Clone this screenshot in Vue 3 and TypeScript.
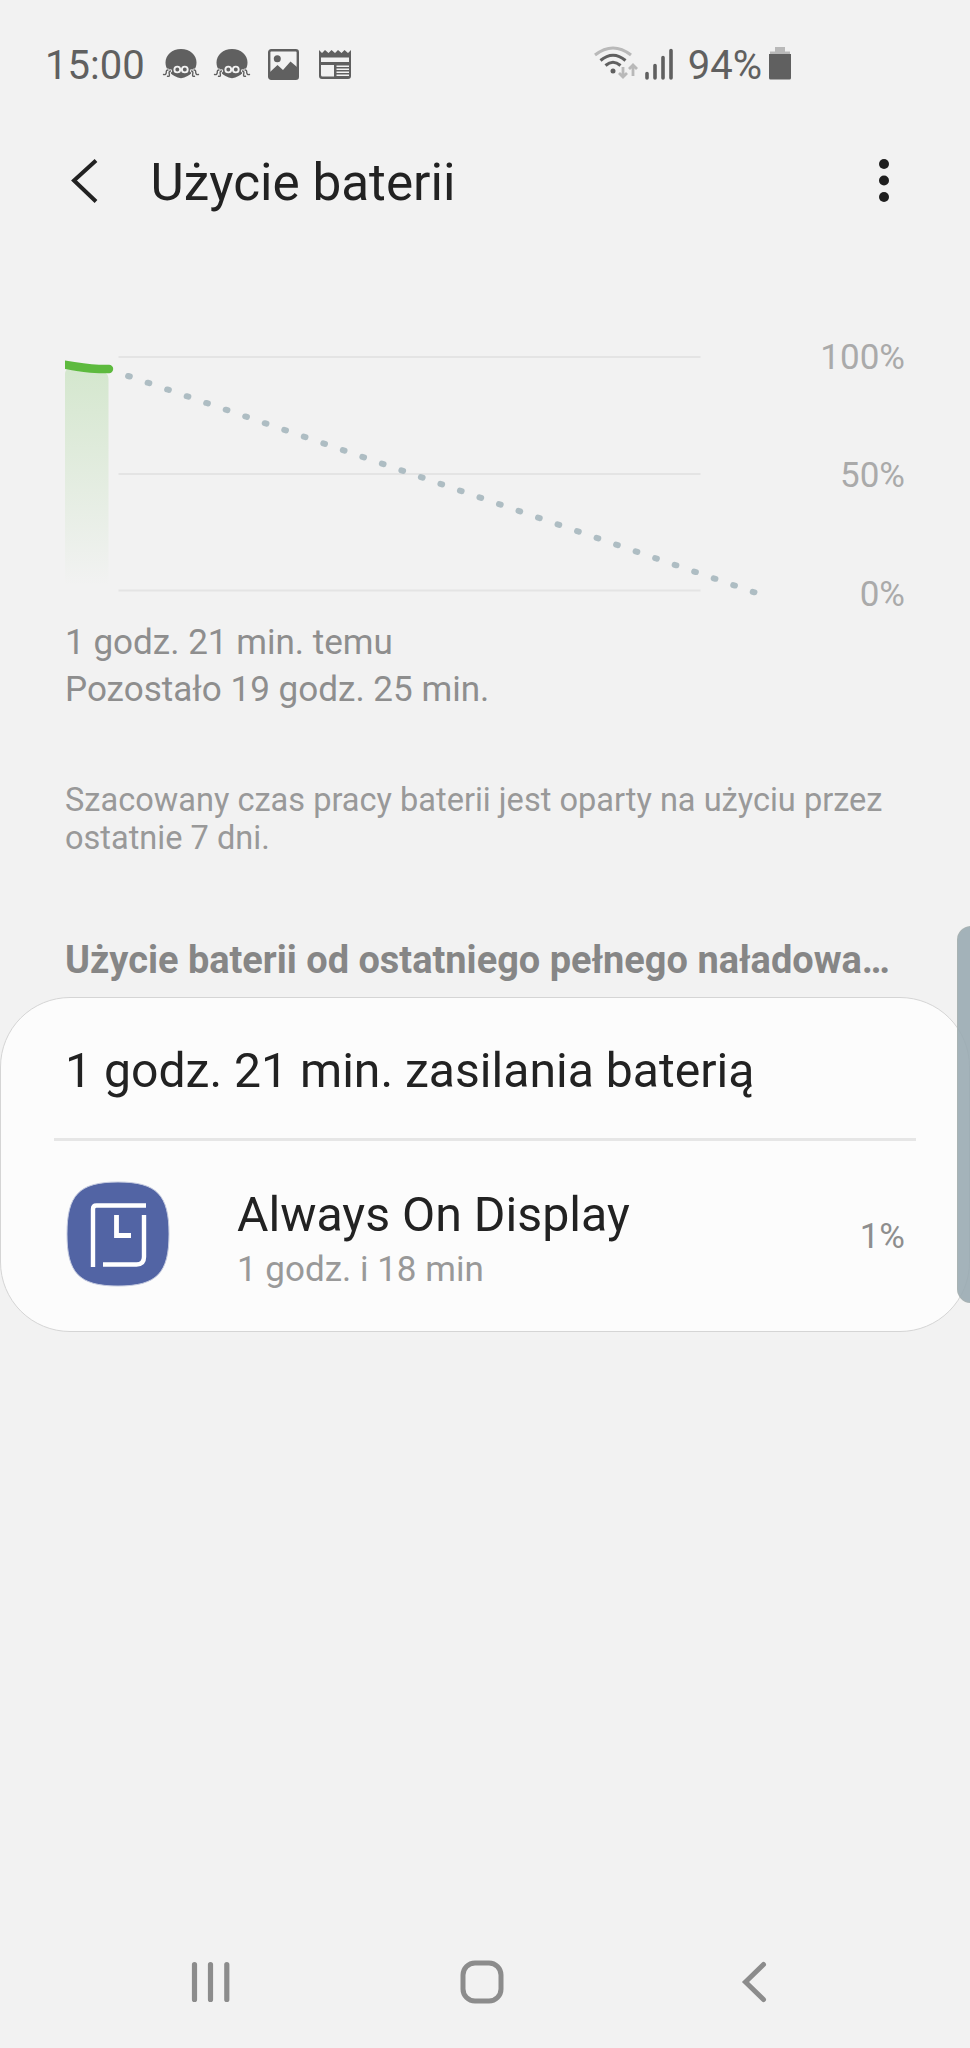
<script setup lang="ts">
interface AppUsage {
  name: string
  duration: string
  percent: string
}

const levels: string[] = ['100%', '50%', '0%']
const gridLines: number[] = [27, 144, 260.5]

// Forecast: evenly spaced dashes falling from the current level to empty.
const forecast = Array.from({ length: 33 }, (_, i) => ({
  x: 63.1 + i * 19.52,
  y: 46 + i * 6.743,
}))

const apps: AppUsage[] = [
  { name: 'Always On Display', duration: '1 godz. i 18 min', percent: '1%' },
]
</script>

<template>
  <div class="screen">
    <header class="status">
      <span class="clock">15:00</span>
      <div class="notices">
        <svg v-for="n in 2" :key="n" class="spider" width="38" height="32" viewBox="0 0 38 32">
          <path d="M19 1C28 1 34.5 7 34.5 14.500C34.5 20 31.500 24.500 25.500 28Q19 32.300 12.500 28C6.500 24.500 3.500 20 3.500 14.500C3.500 7 10 1 19 1Z" fill="#606060" />
          <g fill="none" stroke-linecap="round">
            <path d="M6 22Q4 22 4.300 24.500Q4 27.200 1.500 26.500M8.500 23Q6.500 23.500 7.300 26Q8 28.800 5.500 28.300M32 22Q34 22 33.700 24.500Q34 27.200 36.500 26.500M29.500 23Q31.500 23.500 30.700 26Q30 28.800 32.500 28.300" stroke="#f2f2f2" stroke-width="3.200" />
            <path d="M6 22Q4 22 4.300 24.500Q4 27.200 1.500 26.500M8.500 23Q6.500 23.500 7.300 26Q8 28.800 5.500 28.300M32 22Q34 22 33.700 24.500Q34 27.200 36.500 26.500M29.500 23Q31.500 23.500 30.700 26Q30 28.800 32.500 28.300" stroke="#606060" stroke-width="1.400" />
          </g>
          <g fill="#606060" stroke="#f2f2f2" stroke-width="1.900">
            <circle cx="15.300" cy="21.500" r="2.900" /><circle cx="22.800" cy="21.500" r="2.900" />
          </g>
        </svg>
        <svg class="photo" width="31" height="31" viewBox="0 0 31 31">
          <rect x="1.200" y="1.200" width="28.600" height="28.600" rx="2" fill="none" stroke="#606060" stroke-width="2.400" />
          <circle cx="9.300" cy="9.800" r="3.500" fill="#606060" />
          <path d="M2 23L9.500 16L15 21L22.500 12.500L29 18V29H2Z" fill="#606060" />
        </svg>
        <svg class="news" width="32" height="30" viewBox="0 0 32 30">
          <path d="M0 1L3 4L6 1L9.500 4L12.500 1L16 4L19 1L22.500 4L25.500 1L29 4L32 1V27Q32 30 29 30H3Q0 30 0 27Z" fill="#606060" />
          <path d="M2 8.500H30V13H2ZM2 16H15V27.500H3.500Q2 27.500 2 26ZM17.500 16.500H30V18H17.500ZM17.500 19.500H30V21H17.500ZM17.500 22.500H30V24H17.500ZM17.500 25.500H30V27H17.500Z" fill="#f2f2f2" />
        </svg>
      </div>
      <div class="system">
        <svg class="wifi" width="44" height="34" viewBox="0 0 44 34">
          <g fill="none" stroke="#606060" stroke-width="3.100">
            <path d="M1 9Q19-5 37 9" stroke="#b9b9b9" />
            <path d="M6.500 14.500Q19 4 31.500 14.500" />
            <path d="M11.500 19.500Q19 13 26.500 19.500" />
          </g>
          <circle cx="19" cy="25" r="2.500" fill="#606060" />
          <path d="M29 21V31M25 27L29 31L33 27M39 30V19M35 23L39 19L43 23" fill="none" stroke="#b9b9b9" stroke-width="2.800" />
        </svg>
        <svg class="signal" width="28" height="32" viewBox="0 0 28 32">
          <path d="M2 25.500V30M10 17.500V30M18 9.500V30M26 2.500V30" stroke="#606060" stroke-width="3.600" stroke-linecap="round" />
        </svg>
        <span class="charge">94%</span>
        <svg class="cell" width="22" height="33" viewBox="0 0 22 33">
          <path d="M6 0H16V4.500H21V8H1V4.500H6Z" fill="#b9b9b9" />
          <path d="M0 7H22V31Q22 32.500 20.500 32.500H1.500Q0 32.500 0 31Z" fill="#606060" />
        </svg>
      </div>
    </header>

    <div class="toolbar">
      <svg class="back" width="28" height="46" viewBox="0 0 28 46">
        <path d="M25 2.500L3 22.500L25 43.500" fill="none" stroke="#222" stroke-width="4" />
      </svg>
      <h1>Użycie baterii</h1>
      <svg class="more" width="10" height="43" viewBox="0 0 10 43">
        <g fill="#1f1f1f"><circle cx="5" cy="5" r="5" /><circle cx="5" cy="21.500" r="5" /><circle cx="5" cy="38" r="5" /></g>
      </svg>
    </div>

    <section class="chart">
      <svg width="715" height="280" viewBox="0 0 715 280">
        <defs>
          <linearGradient id="level-fade" x1="0" y1="0" x2="0" y2="1">
            <stop offset="0" stop-color="#5dba3e" stop-opacity="0.2" />
            <stop offset="1" stop-color="#5dba3e" stop-opacity="0" />
          </linearGradient>
        </defs>
        <path v-for="y in gridLines" :key="y" :d="`M53.500 ${y}H635.500`" stroke="#e4e4e4" stroke-width="2.200" />
        <path d="M0 256V44Q0 38 6 40L20 42H38Q43.500 43 43.500 49V256Z" fill="url(#level-fade)" />
        <path d="M0 30.500Q20 34 34 34.800H44A4.200 4.200 0 0 1 44 43.200H34Q16 42.500 0 39Z" fill="#5dba3e" />
        <path v-for="p in forecast" :key="p.x" :d="`M${p.x} ${p.y}l1.700 .5`" stroke="#aebdc3" stroke-width="6" stroke-linecap="round" />
      </svg>
      <ul class="levels">
        <li v-for="level in levels" :key="level">{{ level }}</li>
      </ul>
    </section>

    <div class="times">
      <div>1 godz. 21 min. temu</div>
      <div>Pozostało 19 godz. 25 min.</div>
    </div>
    <p class="note">Szacowany czas pracy baterii jest oparty na użyciu przez<br />ostatnie 7 dni.</p>
    <h2>Użycie baterii od ostatniego pełnego naładowa…</h2>

    <section class="card">
      <div class="total">1 godz. 21 min. zasilania baterią</div>
      <div v-for="app in apps" :key="app.name" class="app">
        <svg class="icon" width="104" height="106" viewBox="0 0 104 106">
          <path d="M52 1C91 1 103 14 103 53S91 105 52 105S1 92 1 53S13 1 52 1Z" fill="#5264a4" stroke="#c5cbe0" stroke-width="1" />
          <g fill="none" stroke="#fff" stroke-width="4.400">
            <path d="M27 86V28Q27 24.500 30.500 24.500H80" />
            <path d="M78 34V76Q78 83.500 70.500 83.500H37" />
            <path d="M50.500 34V54.500H65" stroke-width="4.800" />
          </g>
        </svg>
        <div class="info">
          <div class="name">{{ app.name }}</div>
          <div class="duration">{{ app.duration }}</div>
        </div>
        <span class="percent">{{ app.percent }}</span>
      </div>
    </section>

    <nav class="navbar">
      <svg class="recents" width="40" height="42" viewBox="0 0 40 42">
        <path d="M3.500 3.500V38.500M19.500 3.500V38.500M35.800 3.500V38.500" stroke="#8c8c8c" stroke-width="5.200" stroke-linecap="round" />
      </svg>
      <svg class="home" width="44" height="44" viewBox="0 0 44 44">
        <rect x="3" y="3" width="38" height="38" rx="12" fill="none" stroke="#8c8c8c" stroke-width="5" />
      </svg>
      <svg class="return" width="26" height="42" viewBox="0 0 26 42">
        <path d="M22.500 3.500L4.500 21L22.500 38.500" fill="none" stroke="#8c8c8c" stroke-width="5" stroke-linecap="round" />
      </svg>
    </nav>
    <div class="edge"></div>
  </div>
</template>

<style>
body {
  background: #f2f2f2;
}
</style>

<style scoped>
.screen {
  position: relative;
  display: flex;
  flex-direction: column;
  width: 970px;
  height: 2048px;
  overflow: hidden;
  background: #f2f2f2;
  color: #222;
  font-family: Roboto, "Noto Sans", sans-serif;
  white-space: nowrap;
}
svg {
  display: block;
  flex: none;
}
h1, h2, p, ul {
  margin: 0;
  padding: 0;
  font-weight: 400;
}
.status {
  display: flex;
  height: 130px;
  padding: 0 179px 0 45px;
  box-sizing: border-box;
  color: #606060;
  font-size: 40px;
  line-height: 48px;
}
.clock {
  width: 100px;
  margin-top: 42px;
}
.notices, .system {
  display: flex;
  align-items: flex-start;
}
.notices {
  margin-left: 17px;
}
.spider {
  margin: 48px 13px 0 0;
}
.photo {
  margin: 49px 20px 0 4px;
}
.news {
  margin-top: 49px;
}
.system {
  margin-left: auto;
}
.wifi {
  margin: 46px 7px 0 0;
}
.signal {
  margin: 48px 15px 0 0;
}
.charge {
  margin: 42px 7px 0 0;
}
.cell {
  margin-top: 47px;
}
.toolbar {
  display: flex;
  align-items: center;
  height: 100px;
  padding: 0 81px 0 71px;
}
.back {
  margin-top: 2px;
}
h1 {
  margin: 6px 0 0 51.500px;
  font-size: 51.300px;
  line-height: 60px;
}
.more {
  margin-left: auto;
}
.chart {
  display: flex;
  justify-content: space-between;
  height: 280px;
  margin: 100px 65px 0 65px;
}
.levels {
  display: flex;
  flex-direction: column;
  gap: 77px;
  margin-top: 7px;
  list-style: none;
  color: #aaa;
  font-size: 35px;
  line-height: 41.300px;
  text-align: right;
}
.times {
  margin: 9px 0 0 65px;
  color: #8e8e8e;
  font-size: 35.050px;
  line-height: 47px;
}
.note {
  margin: 68px 0 0 65px;
  color: #999;
  font-size: 32.560px;
  line-height: 38px;
}
h2 {
  margin: 81px 0 0 65px;
  color: #868686;
  font-size: 37.950px;
  font-weight: 700;
  line-height: 44px;
}
.card {
  box-sizing: border-box;
  height: 335px;
  margin-top: 15px;
  border: 1px solid #d5d5d5;
  border-radius: 70px;
  background: #fcfcfc;
}
.total {
  height: 140px;
  margin: 0 53px;
  padding-left: 11px;
  border-bottom: 3px solid #e6e6e6;
  font-size: 48.100px;
  line-height: 145px;
}
.app {
  display: flex;
  align-items: center;
  height: 190px;
  padding: 0 64px 0 66px;
}
.icon {
  margin: -4px 0 0 -1px;
}
.info {
  margin: 9px 0 0 67px;
}
.name {
  font-size: 48.250px;
  line-height: 57px;
}
.duration {
  color: #999;
  font-size: 35px;
  line-height: 53px;
}
.percent {
  margin: 2px 0 0 auto;
  color: #8e8e8e;
  font-size: 35px;
  line-height: 42px;
}
.navbar {
  display: flex;
  align-items: center;
  height: 132px;
  margin-top: auto;
  padding: 0 203px 0 191px;
  justify-content: space-between;
}
.home {
  margin-right: 8px;
}
.edge {
  position: absolute;
  top: 926px;
  left: 957px;
  width: 28px;
  height: 377px;
  box-sizing: border-box;
  border: 1px solid rgba(170, 178, 178, 0.9);
  border-radius: 16px;
  background: rgba(151, 168, 176, 0.88);
}
</style>
